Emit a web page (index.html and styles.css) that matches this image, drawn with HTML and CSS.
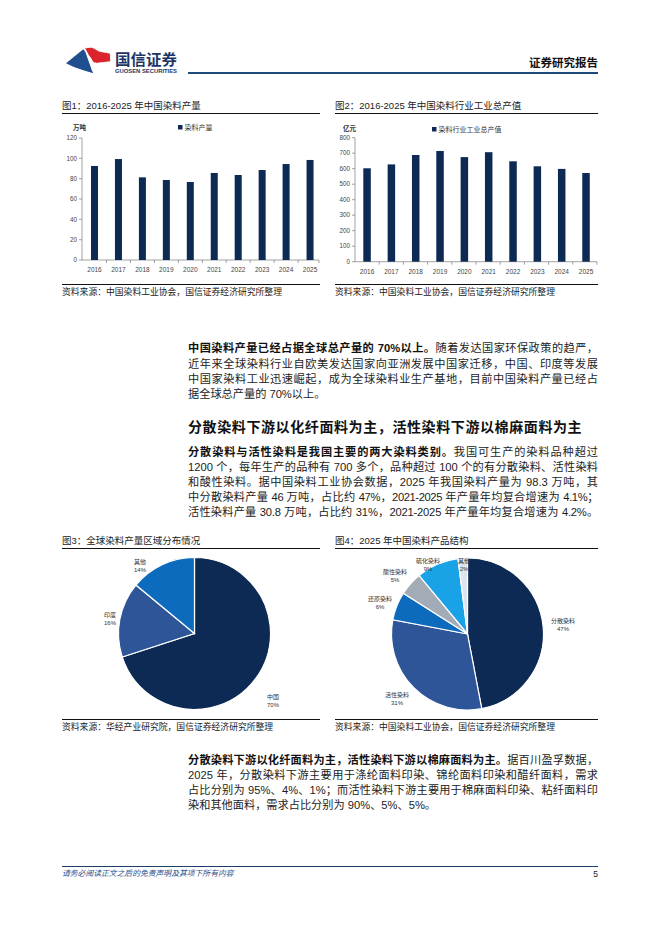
FILE: index.html
```html
<!DOCTYPE html>
<html lang="zh-CN">
<head>
<meta charset="utf-8">
<title>证券研究报告</title>
<link rel="stylesheet" href="styles.css">
</head>
<body>
<div class="page">
  <header class="hdr">
    <svg class="logo" viewBox="0 0 126 28" width="126" height="28">
      <path class="logo-blue" d="M4 17.3 L21.3 3.3 Q24 6 24.6 9.5 Q26.5 15 28 19 Q29.5 24 31.3 27.3 Q20 24 11.3 20.7 Z"/>
      <path class="logo-red" d="M22.5 2.3 Q26 1 29.7 1.3 Q33 2.2 35 4 Q37 5.4 39.7 5.7 Q44 6.2 48.3 7.3 L48.7 15.7 Q41 16.6 34.7 17.3 Q31.6 17 30.7 15.7 Q29 12 26.3 9 Q24.5 5 22.5 2.3 Z"/>
      <text class="logo-cn" x="53" y="19" textLength="62" lengthAdjust="spacingAndGlyphs">国信证券</text>
      <text class="logo-en" x="53" y="27" textLength="62" lengthAdjust="spacingAndGlyphs">GUOSEN SECURITIES</text>
    </svg>
    <div class="hdr-right"><span>证券研究报告</span></div>
  </header>

  <section class="figs figs-top">
    <figure class="fig">
      <div class="fig-title">图1：2016-2025 年中国染料产量</div>
      <svg class="chart" viewBox="0 0 258 170" width="258" height="170">
        <text class="unit" x="11" y="15.5">万吨</text>
        <rect class="bar" x="116" y="11" width="4.5" height="4.5"/>
        <text class="legend" x="122.5" y="15.8">染料产量</text>
        <g class="ylab">
          <text x="15" y="26.2">120</text>
          <text x="15" y="46.5">100</text>
          <text x="15" y="66.9">80</text>
          <text x="15" y="87.2">60</text>
          <text x="15" y="107.5">40</text>
          <text x="15" y="127.9">20</text>
          <text x="15" y="148.2">0</text>
        </g>
        <g class="axis">
          <line x1="20" y1="24" x2="20" y2="146"/>
          <line x1="17" y1="24" x2="20" y2="24"/>
          <line x1="17" y1="44.3" x2="20" y2="44.3"/>
          <line x1="17" y1="64.7" x2="20" y2="64.7"/>
          <line x1="17" y1="85" x2="20" y2="85"/>
          <line x1="17" y1="105.3" x2="20" y2="105.3"/>
          <line x1="17" y1="125.7" x2="20" y2="125.7"/>
          <line x1="17" y1="146" x2="257" y2="146"/>
          <line x1="44.5" y1="146" x2="44.5" y2="149"/>
          <line x1="68.4" y1="146" x2="68.4" y2="149"/>
          <line x1="92.4" y1="146" x2="92.4" y2="149"/>
          <line x1="116.3" y1="146" x2="116.3" y2="149"/>
          <line x1="140.3" y1="146" x2="140.3" y2="149"/>
          <line x1="164.2" y1="146" x2="164.2" y2="149"/>
          <line x1="188.2" y1="146" x2="188.2" y2="149"/>
          <line x1="212.1" y1="146" x2="212.1" y2="149"/>
          <line x1="236.1" y1="146" x2="236.1" y2="149"/>
          <line x1="257" y1="146" x2="257" y2="149"/>
        </g>
        <g class="bars">
          <rect class="bar" x="29" y="51.96" width="7" height="94.04"/>
          <rect class="bar" x="52.95" y="45.04" width="7" height="100.96"/>
          <rect class="bar" x="76.9" y="63.34" width="7" height="82.66"/>
          <rect class="bar" x="100.85" y="65.99" width="7" height="80.01"/>
          <rect class="bar" x="124.8" y="68.02" width="7" height="77.98"/>
          <rect class="bar" x="148.75" y="58.97" width="7" height="87.03"/>
          <rect class="bar" x="172.7" y="61.01" width="7" height="84.99"/>
          <rect class="bar" x="196.65" y="56.02" width="7" height="89.98"/>
          <rect class="bar" x="220.6" y="50.03" width="7" height="95.97"/>
          <rect class="bar" x="244.55" y="45.96" width="7" height="100.04"/>
        </g>
        <g class="xlab">
          <text x="32.5" y="157.5">2016</text>
          <text x="56.45" y="157.5">2017</text>
          <text x="80.4" y="157.5">2018</text>
          <text x="104.35" y="157.5">2019</text>
          <text x="128.3" y="157.5">2020</text>
          <text x="152.25" y="157.5">2021</text>
          <text x="176.2" y="157.5">2022</text>
          <text x="200.15" y="157.5">2023</text>
          <text x="224.1" y="157.5">2024</text>
          <text x="248.05" y="157.5">2025</text>
        </g>
      </svg>
      <div class="fig-src">资料来源：中国染料工业协会，国信证券经济研究所整理</div>
    </figure>

    <figure class="fig">
      <div class="fig-title">图2：2016-2025 年中国染料行业工业总产值</div>
      <svg class="chart" viewBox="0 0 263 170" width="263" height="170">
        <text class="unit" x="8" y="17.3">亿元</text>
        <rect class="bar" x="97" y="13" width="4.5" height="4.5"/>
        <text class="legend" x="103.5" y="17.8">染料行业工业总产值</text>
        <g class="ylab">
          <text x="15" y="25.9">800</text>
          <text x="15" y="41.4">700</text>
          <text x="15" y="56.9">600</text>
          <text x="15" y="72.4">500</text>
          <text x="15" y="87.9">400</text>
          <text x="15" y="103.4">300</text>
          <text x="15" y="118.9">200</text>
          <text x="15" y="134.4">100</text>
          <text x="15" y="149.9">0</text>
        </g>
        <g class="axis">
          <line x1="20" y1="23.7" x2="20" y2="147.7"/>
          <line x1="17" y1="23.7" x2="20" y2="23.7"/>
          <line x1="17" y1="39.2" x2="20" y2="39.2"/>
          <line x1="17" y1="54.7" x2="20" y2="54.7"/>
          <line x1="17" y1="70.2" x2="20" y2="70.2"/>
          <line x1="17" y1="85.7" x2="20" y2="85.7"/>
          <line x1="17" y1="101.2" x2="20" y2="101.2"/>
          <line x1="17" y1="116.7" x2="20" y2="116.7"/>
          <line x1="17" y1="132.2" x2="20" y2="132.2"/>
          <line x1="17" y1="147.7" x2="262" y2="147.7"/>
          <line x1="44.2" y1="147.7" x2="44.2" y2="150.7"/>
          <line x1="68.4" y1="147.7" x2="68.4" y2="150.7"/>
          <line x1="92.6" y1="147.7" x2="92.6" y2="150.7"/>
          <line x1="116.8" y1="147.7" x2="116.8" y2="150.7"/>
          <line x1="141" y1="147.7" x2="141" y2="150.7"/>
          <line x1="165.2" y1="147.7" x2="165.2" y2="150.7"/>
          <line x1="189.4" y1="147.7" x2="189.4" y2="150.7"/>
          <line x1="213.6" y1="147.7" x2="213.6" y2="150.7"/>
          <line x1="237.8" y1="147.7" x2="237.8" y2="150.7"/>
          <line x1="262" y1="147.7" x2="262" y2="150.7"/>
        </g>
        <g class="bars">
          <rect class="bar" x="28.3" y="54.3" width="7.5" height="93.4"/>
          <rect class="bar" x="52.63" y="50.4" width="7.5" height="97.3"/>
          <rect class="bar" x="76.96" y="41" width="7.5" height="106.7"/>
          <rect class="bar" x="101.29" y="37" width="7.5" height="110.7"/>
          <rect class="bar" x="125.62" y="43.1" width="7.5" height="104.6"/>
          <rect class="bar" x="149.95" y="38.2" width="7.5" height="109.5"/>
          <rect class="bar" x="174.28" y="47.3" width="7.5" height="100.4"/>
          <rect class="bar" x="198.61" y="52.3" width="7.5" height="95.4"/>
          <rect class="bar" x="222.94" y="54.9" width="7.5" height="92.8"/>
          <rect class="bar" x="247.27" y="59" width="7.5" height="88.7"/>
        </g>
        <g class="xlab">
          <text x="32.05" y="160.3">2016</text>
          <text x="56.38" y="160.3">2017</text>
          <text x="80.71" y="160.3">2018</text>
          <text x="105.04" y="160.3">2019</text>
          <text x="129.37" y="160.3">2020</text>
          <text x="153.7" y="160.3">2021</text>
          <text x="178.03" y="160.3">2022</text>
          <text x="202.36" y="160.3">2023</text>
          <text x="226.69" y="160.3">2024</text>
          <text x="251.02" y="160.3">2025</text>
        </g>
      </svg>
      <div class="fig-src">资料来源：中国染料工业协会，国信证券经济研究所整理</div>
    </figure>
  </section>

  <p class="para p-first">
    <span class="ln"><strong>中国染料产量已经占据全球总产量的 70%以上。</strong>随着发达国家环保政策的趋严，</span>
    <span class="ln">近年来全球染料行业自欧美发达国家向亚洲发展中国家迁移，中国、印度等发展</span>
    <span class="ln">中国家染料工业迅速崛起，成为全球染料业生产基地，目前中国染料产量已经占</span>
    <span class="ln ln-end">据全球总产量的 70%以上。</span>
  </p>

  <h2 class="sec">分散染料下游以化纤面料为主，活性染料下游以棉麻面料为主</h2>

  <p class="para p-second">
    <span class="ln"><strong>分散染料与活性染料是我国主要的两大染料类别。</strong>我国可生产的染料品种超过</span>
    <span class="ln">1200 个，每年生产的品种有 700 多个，品种超过 100 个的有分散染料、活性染料</span>
    <span class="ln">和酸性染料。据中国染料工业协会数据，2025 年我国染料产量为 98.3 万吨，其</span>
    <span class="ln ln-tighter">中分散染料产量 46 万吨，占比约 47%，2021-2025 年产量年均复合增速为 4.1%；</span>
    <span class="ln ln-tight">活性染料产量 30.8 万吨，占比约 31%，2021-2025 年产量年均复合增速为 4.2%。</span>
  </p>

  <section class="figs figs-mid">
    <figure class="fig">
      <div class="fig-title">图3：全球染料产量区域分布情况</div>
      <svg class="chart" viewBox="0 0 258 170" width="258" height="170">
        <g class="pie">
          <path class="c-navy" d="M132.5 84.5 L132.5 8.5 A76 76 0 1 1 60.22 107.98 Z"/>
          <path class="c-mid" d="M132.5 84.5 L60.22 107.98 A76 76 0 0 1 73.94 36.06 Z"/>
          <path class="c-blue" d="M132.5 84.5 L73.94 36.06 A76 76 0 0 1 132.5 8.5 Z"/>
        </g>
        <g class="plab">
          <text x="78" y="15">其他</text><text x="78" y="22.5">14%</text>
          <text x="48" y="68">印度</text><text x="48" y="75.5">16%</text>
          <text x="211" y="150">中国</text><text x="211" y="157.5">70%</text>
        </g>
      </svg>
      <div class="fig-src">资料来源：华经产业研究院，国信证券经济研究所整理</div>
    </figure>

    <figure class="fig">
      <div class="fig-title">图4：2025 年中国染料产品结构</div>
      <svg class="chart" viewBox="0 0 263 170" width="263" height="170">
        <g class="pie">
          <path class="c-navy" d="M132.5 85 L132.5 9 A76 76 0 0 1 146.74 159.65 Z"/>
          <path class="c-mid" d="M132.5 85 L146.74 159.65 A76 76 0 0 1 57.85 70.76 Z"/>
          <path class="c-blue" d="M132.5 85 L57.85 70.76 A76 76 0 0 1 68.33 44.28 Z"/>
          <path class="c-gray" d="M132.5 85 L68.33 44.28 A76 76 0 0 1 84.06 26.44 Z"/>
          <path class="c-sky" d="M132.5 85 L84.06 26.44 A76 76 0 0 1 122.98 9.6 Z"/>
          <path class="c-pale" d="M132.5 85 L122.98 9.6 A76 76 0 0 1 132.5 9 Z"/>
        </g>
        <g class="plab">
          <text x="228" y="74">分散染料</text><text x="228" y="81.5">47%</text>
          <text x="62" y="148">活性染料</text><text x="62" y="155.5">31%</text>
          <text x="45" y="52">还原染料</text><text x="45" y="59.5">6%</text>
          <text x="60" y="25">酸性染料</text><text x="60" y="32.5">5%</text>
          <text x="93" y="14">硫化染料</text><text x="93" y="21.5">9%</text>
          <text x="129" y="14">其他</text><text x="129" y="21.5">2%</text>
        </g>
      </svg>
      <div class="fig-src">资料来源：中国染料工业协会，国信证券经济研究所整理</div>
    </figure>
  </section>

  <p class="para p-third">
    <span class="ln ln-tight"><strong>分散染料下游以化纤面料为主，活性染料下游以棉麻面料为主。</strong>据百川盈孚数据，</span>
    <span class="ln">2025 年，分散染料下游主要用于涤纶面料印染、锦纶面料印染和醋纤面料，需求</span>
    <span class="ln">占比分别为 95%、4%、1%；而活性染料下游主要用于棉麻面料印染、粘纤面料印</span>
    <span class="ln ln-end">染和其他面料，需求占比分别为 90%、5%、5%。</span>
  </p>

  <footer class="ftr">
    <span class="ftr-note">请务必阅读正文之后的免责声明及其项下所有内容</span>
    <span class="ftr-page">5</span>
  </footer>
</div>
</body>
</html>
```

FILE: styles.css
```css
html, body {
  margin: 0;
  padding: 0;
  background: #ffffff;
}

.page {
  width: 662px;
  height: 936px;
  box-sizing: border-box;
  padding: 46px 64px 0 62px;
  font-family: "Liberation Sans", "Noto Sans CJK SC", sans-serif;
  color: #1a1a1a;
  overflow: hidden;
}

/* header */
.hdr {
  display: flex;
  height: 28px;
}
.logo {
  display: block;
  width: 126px;
  height: 28px;
  flex: none;
}
.logo-blue { fill: #1f4f8e; }
.logo-red { fill: #d9252b; stroke: #ffffff; stroke-width: 0.9; }
.logo-cn {
  font-family: "Noto Sans CJK SC", sans-serif;
  font-size: 15px;
  font-weight: 700;
  fill: #1d3566;
}
.logo-en {
  font-family: "Liberation Sans", sans-serif;
  font-size: 5.8px;
  font-weight: 700;
  fill: #1d3566;
}
.hdr-right {
  flex: 1;
  display: flex;
  justify-content: flex-end;
  align-items: flex-end;
  box-sizing: border-box;
  padding-bottom: 2px;
  border-bottom: 2px solid #1b4a7b;
  font-size: 11.5px;
  line-height: 14px;
  font-weight: 700;
  color: #111;
}

/* figures */
.figs {
  display: grid;
  grid-template-columns: 258px 263px;
  column-gap: 15px;
}
.figs-top { margin-top: 25px; }
.figs-mid { margin-top: 13.5px; }
.fig { margin: 0; }
.fig-title {
  height: 14px;
  font-size: 9.5px;
  line-height: 14px;
  white-space: nowrap;
  border-bottom: 1px solid #111;
  color: #222;
}
.chart {
  display: block;
  height: 170px;
}
.fig-src {
  border-top: 1px solid #111;
  font-size: 8.8px;
  line-height: 14px;
  white-space: nowrap;
  color: #222;
}

.unit {
  font-family: "Noto Sans CJK SC", sans-serif;
  font-size: 6.5px;
  font-weight: 700;
  fill: #333;
}
.legend {
  font-family: "Noto Sans CJK SC", sans-serif;
  font-size: 7px;
  fill: #333;
}
.ylab text {
  font-size: 6.3px;
  fill: #444;
  text-anchor: end;
}
.xlab text {
  font-size: 6.5px;
  fill: #444;
  text-anchor: middle;
}
.axis line {
  stroke: #666;
  stroke-width: 0.6;
}
.bar { fill: #0c2a54; }

.pie path {
  stroke: #ffffff;
  stroke-width: 1.2;
}
.c-navy { fill: #0c2a54; }
.c-mid { fill: #2e5597; }
.c-blue { fill: #0d6bbd; }
.c-gray { fill: #a3abb7; }
.c-sky { fill: #1aa2e6; }
.c-pale { fill: #dbe4ef; }
.plab text {
  font-family: "Liberation Sans", "Noto Sans CJK SC", sans-serif;
  font-size: 6px;
  fill: #333;
  text-anchor: middle;
}

/* body text */
.para {
  margin: 0 0 0 126px;
  width: 410px;
  font-family: "Liberation Sans", "Noto Sans CJK SC", sans-serif;
  font-size: 11.2px;
  line-height: 15.2px;
  color: #1c1c1c;
}
.ln {
  display: block;
  white-space: nowrap;
  text-align: justify;
  text-align-last: justify;
}
.ln-end {
  text-align: left;
  text-align-last: left;
}
.ln-tight {
  letter-spacing: -0.2px;
}
.ln-tighter {
  letter-spacing: -0.4px;
}
.para strong {
  font-weight: 700;
  color: #111;
}
.p-first { margin-top: 42.3px; }
.p-second { margin-top: 7.5px; }
.p-third { margin-top: 18.5px; }

.sec {
  margin: 15px 0 0 126px;
  font-size: 14px;
  line-height: 20px;
  letter-spacing: 0.6px;
  font-weight: 700;
  color: #111;
  white-space: nowrap;
}

/* footer */
.ftr {
  margin-top: 52.2px;
  border-top: 1px solid #1b3f6a;
  display: flex;
  justify-content: space-between;
  align-items: center;
  line-height: 14px;
}
.ftr-note {
  font-size: 7.8px;
  font-style: italic;
  color: #2b4f8a;
}
.ftr-page {
  font-size: 8.5px;
  color: #222;
}
```
